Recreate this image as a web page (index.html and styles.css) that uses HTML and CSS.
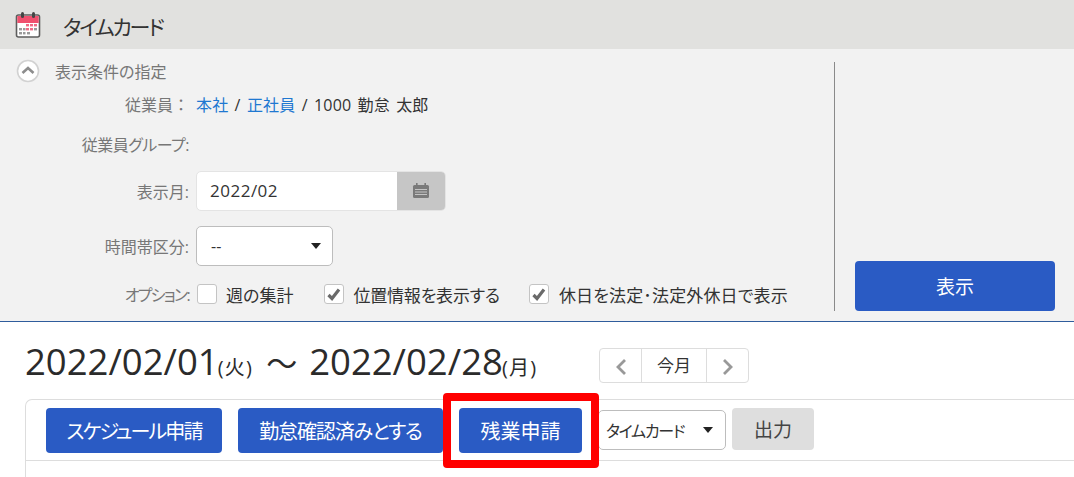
FILE: index.html
```html
<!DOCTYPE html>
<html lang="ja">
<head>
<meta charset="utf-8">
<title>タイムカード</title>
<link rel="stylesheet" href="styles.css">
</head>
<body>
<header class="page-head">
  <svg class="cal-icon" width="28" height="28" viewBox="0 0 28 28">
    <rect x="2.500" y="4" width="23" height="22" rx="2" fill="#fff" stroke="#5d5d5d" stroke-width="1.6"/>
    <path d="M3.300 5h21.400v7H3.300z" fill="#f0506e"/>
    <rect x="7" y="1" width="3" height="6" rx="1.5" fill="#444"/>
    <rect x="18" y="1" width="3" height="6" rx="1.5" fill="#444"/>
    <g fill="#ef6b86"><rect x="12" y="13" width="3" height="2.4"/><rect x="16" y="13" width="3" height="2.4"/><rect x="20" y="13" width="3" height="2.4"/><rect x="12" y="17" width="3" height="2.4"/><rect x="16" y="17" width="3" height="2.4"/></g>
    <g fill="#9a9a9a"><rect x="5" y="17" width="3" height="2.4"/><rect x="9" y="17" width="2.500" height="2.4"/><rect x="20" y="17" width="3" height="2.4"/><rect x="5" y="21" width="3" height="2.4"/><rect x="9" y="21" width="2.500" height="2.4"/><rect x="13" y="21" width="3" height="2.4"/></g>
  </svg>
  <h1 class="page-title">タイムカード</h1>
</header>

<section class="filter">
  <div class="filter-main">
    <div class="filter-title">
      <span class="toggle">
        <svg width="24" height="24" viewBox="0 0 24 24"><circle cx="12" cy="12" r="10.500" fill="#fff" stroke="#d2d2d2" stroke-width="1.6"/><path d="M6.500 14l5.500-5 5.500 5" fill="none" stroke="#8d8d8d" stroke-width="2.6"/></svg>
      </span>
      <span>表示条件の指定</span>
    </div>
    <div class="row row-employee">
      <span class="label label-emp">従業員：</span>
      <span class="value"><a class="link">本社</a> / <a class="link">正社員</a> / 1000 勤怠 太郎</span>
    </div>
    <div class="row row-group">
      <span class="label label-group">従業員グループ:</span>
    </div>
    <div class="row row-month">
      <span class="label">表示月:</span>
      <div class="date-field">
        <span class="date-value">2022/02</span>
        <span class="date-btn">
          <svg width="18" height="18" viewBox="0 0 18 18"><path d="M1 4.500q0-1.500 1.500-1.500h13q1.500 0 1.500 1.500v10q0 1.500-1.500 1.500h-13q-1.500 0-1.500-1.500z" fill="#7a7a7a"/><rect x="4" y="1" width="1.600" height="3" fill="#7a7a7a"/><rect x="12.400" y="1" width="1.600" height="3" fill="#7a7a7a"/><path d="M3 7.500h12M3 10h12M3 12.500h12" stroke="#c4c4c4" stroke-width="1"/></svg>
        </span>
      </div>
    </div>
    <div class="row row-band">
      <span class="label">時間帯区分:</span>
      <div class="select select-band"><span>--</span><i class="caret"></i></div>
    </div>
    <div class="row row-options">
      <span class="label label-opt">オプション:</span>
      <div class="options">
        <span class="check-item"><i class="check"></i>週の集計</span>
        <span class="check-item item-geo"><i class="check"><svg width="18" height="18" viewBox="0 0 18 18"><path d="M3.500 10l3.500 3.500 7-9" fill="none" stroke="#6a6a6a" stroke-width="3.200"/></svg></i>位置情報を表示する</span>
        <span class="check-item item-hol"><i class="check"><svg width="18" height="18" viewBox="0 0 18 18"><path d="M3.500 10l3.500 3.500 7-9" fill="none" stroke="#6a6a6a" stroke-width="3.200"/></svg></i>休日を法定･法定外休日で表示</span>
      </div>
    </div>
  </div>
  <div class="filter-side">
    <button class="btn btn-show">表示</button>
  </div>
</section>

<main class="content">
  <div class="range-row">
    <h2 class="range">2022/02/01<small>(火)</small><span class="tilde">～</span>2022/02/28<small>(月)</small></h2>
    <div class="pager">
      <span class="pager-btn"><svg width="12" height="18" viewBox="0 0 12 18"><path d="M10 2L3 9l7 7" fill="none" stroke="#999" stroke-width="2.800"/></svg></span>
      <span class="pager-today">今月</span>
      <span class="pager-btn"><svg width="12" height="18" viewBox="0 0 12 18"><path d="M2 2l7 7-7 7" fill="none" stroke="#999" stroke-width="2.800"/></svg></span>
    </div>
  </div>
  <div class="card">
    <div class="toolbar">
      <button class="btn btn-tool btn-schedule">スケジュール申請</button>
      <button class="btn btn-tool btn-confirm">勤怠確認済みとする</button>
      <button class="btn btn-tool btn-marked">残業申請</button>
      <div class="select select-type"><span>タイムカード</span><i class="caret"></i></div>
      <button class="btn btn-output">出力</button>
    </div>
  </div>
</main>
</body>
</html>
```

FILE: styles.css
```css
* { box-sizing: border-box; }
html, body { margin: 0; padding: 0; }
body {
  width: 1074px;
  height: 477px;
  overflow: hidden;
  background: #fff;
  color: #333;
  font-family: "Open Sans", "Noto Sans CJK JP", sans-serif;
  font-size: 16px;
  font-feature-settings: "palt";
}
.page-head {
  height: 49px;
  background: #e1e1df;
  display: flex;
  align-items: center;
  padding-left: 14px;
}
.cal-icon { display: block; }
.page-title {
  margin: 2px 0 0 21px;
  font-size: 21px;
  font-weight: 400;
  letter-spacing: -2.2px;
  color: #333;
}
.filter {
  height: 273px;
  background: #f2f2f2;
  border-bottom: 1px solid #2f5c9c;
  display: flex;
  align-items: flex-start;
}
.filter-main {
  width: 835px;
  height: 249px;
  margin-top: 13px;
  border-right: 1px solid #8a8a8a;
}
.filter-title {
  display: flex;
  align-items: center;
  height: 20px;
  margin-top: -1px;
  padding-left: 16px;
  color: #777;
  font-size: 16px;
}
.toggle { display: block; width: 24px; height: 24px; margin-right: 15px; }
.row { display: flex; align-items: center; }
.label {
  width: 189px;
  text-align: right;
  flex: none;
  color: #777;
  font-size: 16px;
}
.label-emp { font-feature-settings: normal; }
.label-group { letter-spacing: -0.5px; }
.label-opt { letter-spacing: -1.7px; }
.value { margin-left: 7px; color: #333; font-size: 16px; letter-spacing: 0.15px; word-spacing: 2px; white-space: nowrap; }
.link { color: #1f78d1; }
.row-employee { margin-top: 12px; height: 22px; }
.row-group { margin-top: 18px; height: 22px; }
.row-month { margin-top: 16px; height: 40px; }
.row-band { margin-top: 15px; height: 40px; }
.row-options { margin-top: 15px; height: 26px; }
.date-field {
  margin-left: 7px;
  width: 250px;
  height: 40px;
  display: flex;
  border: 1px solid #e4e4e4;
  border-radius: 5px;
  background: #fff;
  overflow: hidden;
}
.date-value { flex: 1; padding-left: 13px; line-height: 38px; font-size: 17px; letter-spacing: 0.5px; }
.date-btn {
  width: 48px;
  background: #c6c6c6;
  display: flex;
  align-items: center;
  justify-content: center;
}
.select {
  height: 40px;
  background: #fff;
  border: 1px solid #bdbdbd;
  border-radius: 5px;
  display: flex;
  align-items: center;
  justify-content: space-between;
}
.select-band { margin-left: 7px; width: 137px; padding: 0 11px 0 14px; }
.caret {
  width: 0;
  height: 0;
  border-left: 5px solid transparent;
  border-right: 5px solid transparent;
  border-top: 6px solid #222;
  display: block;
}
.options { display: flex; margin-left: 8px; align-items: center; }
.check-item { display: flex; align-items: center; font-size: 17px; white-space: nowrap; }
.check {
  width: 20px;
  height: 20px;
  background: #fff;
  border: 1px solid #c4c4c4;
  border-radius: 3px;
  margin-right: 9px;
  display: flex;
  align-items: center;
  justify-content: center;
}
.item-geo { margin-left: 31px; letter-spacing: -0.2px; }
.item-hol { margin-left: 29px; letter-spacing: 0.15px; }
.item-hol .check { margin-right: 10px; }
.filter-side {
  flex: 1;
  display: flex;
  padding: 212px 0 0 20px;
}
.btn {
  border: 0;
  border-radius: 4px;
  font-family: inherit;
  font-feature-settings: inherit;
  background: #2a5bc4;
  color: #fff;
  padding: 0;
  display: block;
}
.btn-show { width: 200px; height: 50px; font-size: 19px; }
.content { padding: 0 0 0 25px; }
.range-row { display: flex; align-items: flex-start; height: 77px; }
.range {
  margin: 16px 0 0;
  width: 574px;
  font-size: 36.500px;
  line-height: 46px;
  font-weight: 400;
  color: #2b2b2b;
  white-space: nowrap;
}
.range small { font-size: 20px; letter-spacing: 1.2px; margin-left: -1px; }
.tilde { font-size: 31px; margin: 0 12px 0 13px; }
.pager {
  margin-top: 26px;
  width: 150px;
  height: 35px;
  display: flex;
  border: 1px solid #ddd;
  border-radius: 4px;
  background: #fff;
}
.pager-btn { width: 41px; display: flex; align-items: center; justify-content: center; padding-top: 2px; }
.pager-today {
  flex: 1;
  border: solid #ddd;
  border-width: 0 1px;
  text-align: center;
  line-height: 33px;
  font-size: 17px;
}
.card {
  height: 90px;
  border: 1px solid #ddd;
  border-right: 0;
  border-bottom: 0;
  border-top-left-radius: 7px;
}
.toolbar {
  height: 61px;
  border-bottom: 1px solid #ddd;
  display: flex;
  align-items: flex-start;
  padding: 8px 0 0 20px;
}
.btn-tool { height: 45px; font-size: 20px; }
.btn-schedule { width: 176px; letter-spacing: -1.9px; }
.btn-confirm { width: 205px; margin-left: 16px; letter-spacing: -1.1px; }
.btn-marked { width: 123px; margin-left: 16px; position: relative; }
.btn-marked::after {
  content: "";
  position: absolute;
  left: -16px;
  right: -17px;
  top: -15px;
  bottom: -15px;
  border: 8px solid #f00;
  border-radius: 4px;
}
.select-type {
  width: 128px;
  margin: 2px 0 0 16px;
  padding: 0 12px 0 7px;
  font-size: 16px;
  letter-spacing: -1.3px;
}
.btn-output {
  width: 82px;
  height: 42px;
  margin-left: 6px;
  background: #dedede;
  color: #444;
  font-size: 19px;
}
```
